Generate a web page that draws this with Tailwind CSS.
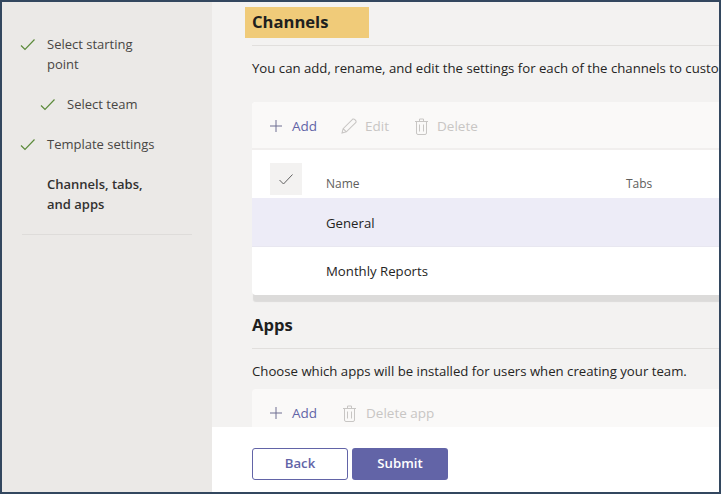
<!DOCTYPE html>
<html lang="en">
<head>
<meta charset="UTF-8">
<title>Channels</title>
<script src="https://cdn.jsdelivr.net/npm/@tailwindcss/browser@4"></script>
</head>
<body class="overflow-hidden bg-white">
<div class="flex h-[494px] w-[721px] overflow-hidden border-2 border-[#33475f] font-['Open_Sans',sans-serif] text-[13.2px] text-[#252423]">

  <!-- steps -->
  <aside class="w-[210px] shrink-0 bg-[#ebe9e7] pt-[32px] text-[13px]">
    <ul class="leading-[20px] text-[#484644]">
      <li class="flex pl-[18px]">
        <svg class="mr-[12px] mt-[3px] h-[15px] w-[15px] shrink-0" viewBox="0 0 15 15" fill="none" stroke="#5b8a3a" stroke-width="1.2"><path d="M1 8.5 L5 12.5 L14.5 2.5"/></svg>
        <span class="w-[110px]">Select starting point</span>
      </li>
      <li class="mt-[20px] flex pl-[38px]">
        <svg class="mr-[12px] mt-[3px] h-[15px] w-[15px] shrink-0" viewBox="0 0 15 15" fill="none" stroke="#5b8a3a" stroke-width="1.2"><path d="M1 8.5 L5 12.5 L14.5 2.5"/></svg>
        <span>Select team</span>
      </li>
      <li class="mt-[20px] flex pl-[18px]">
        <svg class="mr-[12px] mt-[3px] h-[15px] w-[15px] shrink-0" viewBox="0 0 15 15" fill="none" stroke="#5b8a3a" stroke-width="1.2"><path d="M1 8.5 L5 12.5 L14.5 2.5"/></svg>
        <span>Template settings</span>
      </li>
      <li class="mt-[20px] pl-[45px] font-semibold text-[#323130]">
        <span class="block w-[110px]">Channels, tabs, and apps</span>
      </li>
    </ul>
    <div class="ml-[20px] mt-[20px] h-px w-[170px] bg-[#dedcda]"></div>
  </aside>

  <!-- main column -->
  <div class="flex min-w-0 flex-1 flex-col">
    <div class="h-[425px] overflow-hidden bg-[#f3f2f1] pl-[40px]">
      <div class="w-[700px]">
        <div class="-ml-[7px] mt-[5px] flex h-[31px] w-[124px] items-center bg-[#f0cb79] pl-[7px] text-[16.6px] font-bold text-[#201f1e]">Channels</div>
        <div class="mt-[7px] h-px bg-[#e1dfdd]"></div>
        <p class="mt-[13px] whitespace-nowrap leading-[18px]">You can add, rename, and edit the settings for each of the channels to customize your team.</p>

        <section class="mt-[25px] rounded-[4px] bg-white shadow-[0_8px_1px_-1px_#dcdbda]">
          <div class="flex h-[48px] items-center rounded-t-[4px] border-b-2 border-[#f1efee] bg-[#faf9f8] pl-[18px] pt-[2px] text-[13.5px]">
            <span class="flex items-center gap-[10px] text-[#6264a7]">
              <svg class="h-[12px] w-[12px]" viewBox="0 0 12 12" stroke="#6e6f92" stroke-width="1"><path d="M6 0V12M0 6H12"/></svg>Add
            </span>
            <span class="ml-[24px] flex items-center gap-[8px] text-[#c8c6c4]">
              <svg class="h-[16px] w-[16px]" viewBox="0 0 15 15" fill="none" stroke="#c8c6c4"><path d="M1 14 L2 10 L11 1 Q12 0.5 13.5 2 Q14.5 3.5 14 4 L5 13 Z M2 10 L5 13"/></svg>Edit
            </span>
            <span class="ml-[26px] flex items-center gap-[9px] text-[#c8c6c4]">
              <svg class="h-[17px] w-[13px]" viewBox="0 0 13 17" fill="none" stroke="#c8c6c4"><path d="M0 3.5H13M4.5 3.5V1H8.5V3.5M1.5 3.5V15Q1.5 16.5 3 16.5H10Q11.5 16.5 11.5 15V3.5M4.5 6.5V13.5M8.5 6.5V13.5"/></svg>Delete
            </span>
          </div>
          <div class="relative flex h-[48px] text-[12px] text-[#605e5c]">
            <span class="ml-[18px] mt-[13px] flex h-[32px] w-[32px] items-center justify-center bg-[#f3f2f1]">
              <svg class="h-[11px] w-[14px]" viewBox="0 0 14 11" fill="none" stroke="#616161"><path d="M0.5 6 L4.5 10 L13.5 0.5"/></svg>
            </span>
            <span class="absolute left-[74px] top-[25px] leading-[18px]">Name</span>
            <span class="absolute left-[374px] top-[25px] leading-[18px]">Tabs</span>
          </div>
          <div class="flex h-[48px] items-center bg-[#edecf7] pl-[74px] pt-[3px]">General</div>
          <div class="h-px bg-[#e8e7f0]"></div>
          <div class="flex h-[48px] items-center pl-[74px] pt-[1px]">Monthly Reports</div>
        </section>

        <h2 class="mt-[19px] text-[16.6px] font-bold leading-[22px] text-[#201f1e]">Apps</h2>
        <div class="mt-[12px] h-px bg-[#e1dfdd]"></div>
        <p class="mt-[13px] leading-[18px]">Choose which apps will be installed for users when creating your team.</p>

        <section class="mt-[9px] h-[60px] rounded-t-[4px] bg-[#faf9f8]">
          <div class="flex h-[48px] items-center pl-[18px] text-[13.5px]">
            <span class="flex items-center gap-[10px] text-[#6264a7]">
              <svg class="h-[12px] w-[12px]" viewBox="0 0 12 12" stroke="#6e6f92" stroke-width="1"><path d="M6 0V12M0 6H12"/></svg>Add
            </span>
            <span class="ml-[26px] flex items-center gap-[10px] text-[#c8c6c4]">
              <svg class="h-[17px] w-[13px]" viewBox="0 0 13 17" fill="none" stroke="#c8c6c4"><path d="M0 3.5H13M4.5 3.5V1H8.5V3.5M1.5 3.5V15Q1.5 16.5 3 16.5H10Q11.5 16.5 11.5 15V3.5M4.5 6.5V13.5M8.5 6.5V13.5"/></svg>Delete app
            </span>
          </div>
        </section>
      </div>
    </div>

    <footer class="flex flex-1 items-start gap-[4px] bg-white pl-[40px] pt-[21px]">
      <button class="h-[32px] w-[96px] rounded-[3px] border border-[#6264a7] bg-white font-semibold text-[#6264a7]">Back</button>
      <button class="h-[32px] w-[96px] rounded-[3px] bg-[#6264a7] font-semibold text-white">Submit</button>
    </footer>
  </div>
</div>
</body>
</html>
